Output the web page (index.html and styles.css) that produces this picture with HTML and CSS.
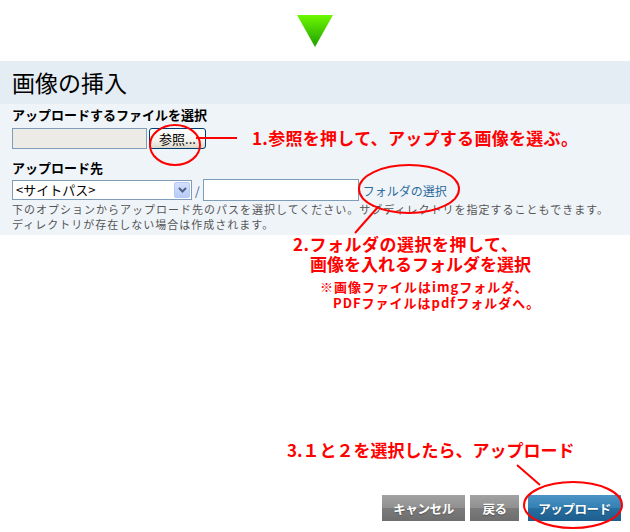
FILE: index.html
```html
<!DOCTYPE html>
<html lang="ja">
<head>
    <meta charset="UTF-8">
    <title>画像の挿入</title>
    <link rel="stylesheet" href="styles.css">
</head>
<body>
    <div class="page">
        <div class="step-arrow">
            <svg width="36" height="32" viewBox="0 0 36 32">
                <defs>
                    <linearGradient id="arrowGrad" x1="0" y1="0" x2="0" y2="1">
                        <stop offset="0" stop-color="#6cf800"/>
                        <stop offset="1" stop-color="#1e9e00"/>
                    </linearGradient>
                </defs>
                <polygon points="0,0 36,0 18,32" fill="url(#arrowGrad)"/>
            </svg>
        </div>

        <h1 class="title">画像の挿入</h1>

        <div class="panel">
            <div class="field-label">アップロードするファイルを選択</div>
            <div class="file-row">
                <div class="file-field"></div>
                <button class="browse-btn">参照...</button>
            </div>

            <div class="field-label second">アップロード先</div>
            <div class="path-row">
                <div class="select-box">
                    <span>&lt;サイトパス&gt;</span>
                    <span class="select-arrow">
                        <svg width="9" height="6" viewBox="0 0 9 6">
                            <path d="M1 1 L4.5 4.5 L8 1" fill="none" stroke="#4d6185" stroke-width="2"/>
                        </svg>
                    </span>
                </div>
                <span class="slash">/</span>
                <div class="text-field"></div>
                <a class="folder-link" href="#">フォルダの選択</a>
            </div>
            <p class="help">下のオプションからアップロード先のパスを選択してください。サブディレクトリを指定することもできます。<br>ディレクトリが存在しない場合は作成されます。</p>
        </div>

        <div class="actions">
            <button class="btn btn-grey btn-cancel">キャンセル</button>
            <button class="btn btn-grey btn-back">戻る</button>
            <button class="btn btn-blue btn-upload">アップロード</button>
        </div>

        <!-- 説明用の赤い注釈 -->
        <svg class="marks" width="630" height="532" viewBox="0 0 630 532">
            <g fill="none" stroke="#f00" stroke-width="2">
                <ellipse cx="175" cy="145" rx="25" ry="20"/>
                <line x1="196" y1="138" x2="237" y2="138"/>
                <ellipse cx="409" cy="189" rx="50" ry="24"/>
                <line x1="378" y1="207" x2="355" y2="233"/>
                <line x1="517" y1="465" x2="540" y2="485"/>
                <ellipse cx="573" cy="505" rx="49" ry="23"/>
            </g>
        </svg>

        <div class="note note-1">1.参照を押して、アップする画像を選ぶ。</div>
        <div class="note note-2">
            <div>2.フォルダの選択を押して、</div>
            <div class="indent">画像を入れるフォルダを選択</div>
        </div>
        <div class="note-small">
            <div>※画像ファイルはimgフォルダ、</div>
            <div class="indent">PDFファイルはpdfフォルダへ。</div>
        </div>
        <div class="note note-3">3.１と２を選択したら、アップロード</div>
    </div>
</body>
</html>
```

FILE: styles.css
```css
body {
    margin: 0;
    padding: 0;
    background-color: #fff;
    font-family: "Noto Sans CJK JP", "Noto Sans", sans-serif;
    color: #000;
}

.page {
    position: relative;
    width: 630px;
    height: 532px;
    overflow: hidden;
    display: flex;
    flex-direction: column;
}

.step-arrow {
    height: 61px;
    box-sizing: border-box;
    padding-top: 15px;
    display: flex;
    justify-content: center;
}

.title {
    margin: 0;
    height: 43px;
    line-height: 43px;
    padding-left: 12px;
    font-size: 23px;
    font-weight: normal;
    background-color: #e4ecf4;
}

.panel {
    height: 131px;
    box-sizing: border-box;
    padding: 3px 12px 0;
    background-color: #eff4f9;
}

.field-label {
    font-size: 13px;
    font-weight: bold;
    line-height: 16px;
}

.field-label.second {
    margin-top: 11px;
}

.file-row {
    margin-top: 5px;
    display: flex;
    height: 21px;
}

.file-field {
    width: 135px;
    height: 21px;
    box-sizing: border-box;
    border: 1px solid #7f9db9;
    background-color: #ecebe6;
}

.browse-btn {
    margin-left: 2px;
    width: 57px;
    height: 21px;
    padding: 0;
    border: 1px solid #003c74;
    border-radius: 3px;
    background: linear-gradient(#ffffff, #f4f3ee 60%, #dcd8c8);
    font-family: "Noto Sans CJK JP", sans-serif;
    font-size: 13px;
    line-height: 18px;
    color: #000;
}

.path-row {
    margin-top: 3px;
    height: 22px;
    display: flex;
    align-items: center;
}

.select-box {
    width: 180px;
    height: 20px;
    box-sizing: border-box;
    border: 1px solid #7f9db9;
    background-color: #fff;
    display: flex;
    align-items: center;
    justify-content: space-between;
    padding-left: 3px;
    font-size: 13px;
    line-height: 18px;
}

.select-arrow {
    width: 16px;
    height: 16px;
    margin-right: 1px;
    box-sizing: border-box;
    border: 1px solid #b6c8f4;
    border-radius: 2px;
    background: linear-gradient(#d3e0fd, #b8cbf7);
    display: flex;
    align-items: center;
    justify-content: center;
}

.slash {
    margin: 0 3px 0 3px;
    font-size: 12px;
    color: #3d5a99;
}

.text-field {
    width: 156px;
    height: 22px;
    box-sizing: border-box;
    border: 1px solid #7f9db9;
    background-color: #fff;
}

.folder-link {
    margin-left: 4px;
    font-size: 12px;
    color: #2b6a9a;
    text-decoration: none;
}

.help {
    margin: 1px 0 0;
    font-size: 11px;
    line-height: 15px;
    letter-spacing: 1px;
    color: #555;
}

.actions {
    margin-top: auto;
    padding: 0 9px 11px 0;
    display: flex;
    justify-content: flex-end;
}

.btn {
    height: 26px;
    padding: 0;
    border: 0;
    color: #fff;
    font-family: "Noto Sans CJK JP", sans-serif;
    font-size: 12.5px;
    font-weight: bold;
    letter-spacing: -0.4px;
    text-shadow: 0 1px 1px rgba(0, 0, 0, 0.3);
}

.btn-grey {
    background: linear-gradient(#a2a2a2 0%, #909090 50%, #7b7b7b 51%, #6e6e6e 100%);
}

.btn-blue {
    background: linear-gradient(#4a93c4 0%, #3480b3 50%, #266fa2 51%, #1d5e8d 100%);
}

.btn-cancel {
    width: 83px;
}

.btn-back {
    width: 49px;
    margin-left: 5px;
}

.btn-upload {
    width: 93px;
    margin-left: 9px;
}

.marks {
    position: absolute;
    top: 0;
    left: 0;
    pointer-events: none;
}

.note {
    position: absolute;
    color: #f00;
    font-size: 17px;
    font-weight: bold;
    line-height: 20px;
    letter-spacing: 0.3px;
    white-space: nowrap;
}

.note-1 {
    left: 252px;
    top: 128px;
}

.note-2 {
    left: 293px;
    top: 234px;
    letter-spacing: 0.5px;
}

.note-2 .indent {
    padding-left: 17px;
    letter-spacing: 0;
}

.note-3 {
    left: 287px;
    top: 440px;
    letter-spacing: 0;
}

.note-small {
    position: absolute;
    left: 320px;
    top: 279px;
    color: #f00;
    font-size: 13px;
    font-weight: bold;
    line-height: 16px;
    letter-spacing: 1px;
    white-space: nowrap;
}

.note-small .indent {
    padding-left: 13px;
}
```
